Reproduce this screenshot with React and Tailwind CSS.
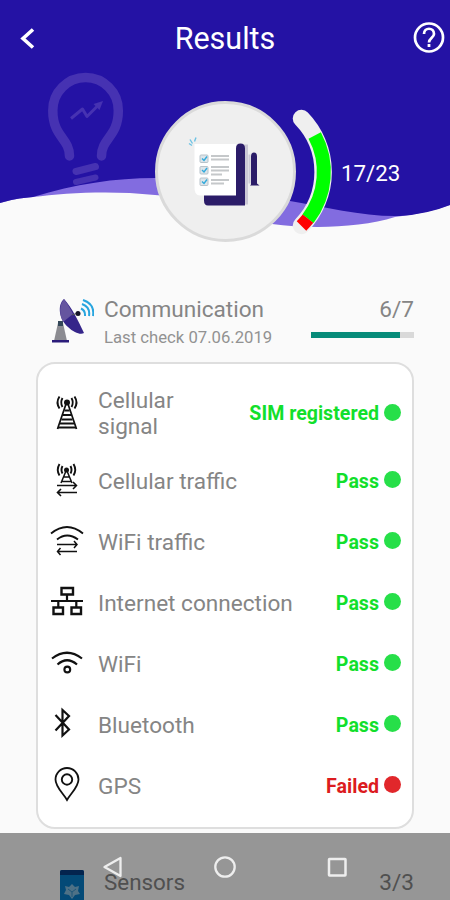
import React from "react";

const tests = [
	{ name: "Cellular signal", result: "SIM registered", ok: true, icon: TowerIcon },
	{ name: "Cellular traffic", result: "Pass", ok: true, icon: TowerTrafficIcon },
	{ name: "WiFi traffic", result: "Pass", ok: true, icon: WifiTrafficIcon },
	{ name: "Internet connection", result: "Pass", ok: true, icon: NetworkIcon },
	{ name: "WiFi", result: "Pass", ok: true, icon: WifiIcon },
	{ name: "Bluetooth", result: "Pass", ok: true, icon: BluetoothIcon },
	{ name: "GPS", result: "Failed", ok: false, icon: PinIcon },
];

function Icon({ children }) {
	return (
		<svg
			width="36"
			height="40"
			viewBox="0 0 36 40"
			fill="none"
			stroke="#111"
			strokeWidth="1.6"
			className="shrink-0"
		>
			{children}
		</svg>
	);
}

function TowerIcon() {
	return (
		<Icon>
			<circle cx="18" cy="9.5" r="3" fill="#111" stroke="none" />
			<path d="M17 11L8.5 36M19 11L27.5 36" strokeWidth="1.7" />
			<path d="M15.5 17.5h5M14 22h8M12.5 26.5h11M11 30.500h14M9 34.500h18" strokeWidth="2" />
			<path d="M13.500 5Q11 9.500 13.500 14M22.500 5Q25 9.500 22.500 14M10.500 3.500Q6.500 9.500 10.500 15.500M25.500 3.500Q29.500 9.500 25.500 15.500" strokeWidth="1.900" />
		</Icon>
	);
}

function TowerTrafficIcon() {
	return (
		<Icon>
			<circle cx="17.500" cy="9" r="2.500" fill="#111" stroke="none" />
			<path d="M17 10L12 22M18 10L23 22M15 16h5M13 20.500h9" strokeWidth="1.500" />
			<path d="M13.500 5Q11.500 9 13.500 12.500M21.500 5Q23.500 9 21.500 12.500M10.500 3Q7 9 10.500 14.500M24.500 3Q28 9 24.500 14.500" strokeWidth="1.900" />
			<path d="M8 24.500h19M24 21l3.500 3.500L24 28" strokeWidth="1.500" />
			<path d="M28 31.500H8.500M12 28L8.500 31.500l3.500 3.500" strokeWidth="1.600" />
		</Icon>
	);
}

function WifiTrafficIcon() {
	return (
		<Icon>
			<path d="M2 11.500Q18 -1.500 34 11.500" strokeWidth="1.900" />
			<path d="M8 17.500Q18 9.500 29 17.500" strokeWidth="1.900" />
			<path d="M8 22.500h20M25 19l3 3.500-3 3.500" strokeWidth="1.500" />
			<path d="M28 29.500H8.500M11.500 26l-3 3.500 3 3.500" strokeWidth="1.500" />
		</Icon>
	);
}

function NetworkIcon() {
	return (
		<Icon>
			<path d="M12.500 5h11.500v6.500H12.500zM4.500 24.500h9.500v6.500H4.500zM22.500 24.500h9.500v6.500h-9.500z" strokeWidth="2.400" />
			<path d="M2 18h32M18 12v6M9.300 18v7M27.300 18v7" strokeWidth="2.200" />
		</Icon>
	);
}

function WifiIcon() {
	return (
		<Icon>
			<path d="M3 14.500Q18 3 33 14.500M8.500 20.500Q18 12 28 20.500" strokeWidth="2.200" />
			<circle cx="18.300" cy="25.500" r="2.900" strokeWidth="2.100" />
		</Icon>
	);
}

function BluetoothIcon() {
	return (
		<Icon>
			<path d="M6.500 10L20 24.500l-6.500 6V5L20 11 6.500 25.500" strokeWidth="2.200" />
		</Icon>
	);
}

function PinIcon() {
	return (
		<Icon>
			<path d="M18 34C14 27 6.500 21 6.500 13.500a11.500 11.500 0 0 1 23 0C29.500 21 22 27 18 34z" strokeWidth="1.800" />
			<circle cx="18" cy="13.500" r="5.200" strokeWidth="1.900" />
		</Icon>
	);
}

function HeaderBackground() {
	return (
		<svg className="absolute inset-0" width="450" height="245" viewBox="0 0 450 245" fill="none">
			<path d="M0 0H450V205Q428 213 395 217C360 228 310 229 272 224C220 213 190 198 155 195C110 190 65 193 33 197C20 198 10 200 0 203z" fill="#826ce0" />
			<path d="M0 0H450V205Q428 214 400 216C365 217 325 207 290 201C250 190 215 178 155 178C115 178 75 184 33 197C20 198 10 200 0 203z" fill="#2412a4" />
			<g stroke="#4632b2" strokeLinecap="round" strokeLinejoin="round">
				<path d="M69.500 156C69.500 138 52.800 137 52.800 110.500A32.750 33 0 0 1 118.300 110.500C118.300 137 101.500 138 101.500 156" strokeWidth="9.500" />
				<path d="M76 171.500L95.500 166.500" strokeWidth="7" />
				<path d="M76 182L95.500 177.500" strokeWidth="6" />
				<path d="M71 118.500L82.500 109L87 116.500L98 105.500" strokeWidth="3" strokeLinecap="butt" />
				<path d="M93.500 104L103 101L99.500 110z" fill="#4632b2" stroke="none" />
			</g>
		</svg>
	);
}

function ChecklistBadge() {
	return (
		<div className="flex size-[141px] items-center justify-center rounded-full border-3 border-[#dadada] bg-[#efefef]">
			<svg width="135" height="135" viewBox="0 5.5 135 135" fill="none">
				<path d="M84 46h6v60h-6z" fill="#cbc8d5" />
				<path d="M46 96V102Q46 107 50 107H87V50Q87 45 82.500 45Q78 45 78 50V96z" fill="#2b1c68" />
				<path d="M93 86V58Q93 54 96 54Q99 54 99 58V85L101.500 87H92z" fill="#2b1c68" />
				<path d="M91.500 56v29" stroke="#cbc8d5" strokeWidth="2" />
				<path d="M36.500 45.500H78V97H42Q36 97 36.500 88z" fill="#fff" />
				<g stroke="#c5c8ca" strokeWidth="1.800">
					<path d="M53 57.500h18M53 61h18M53 68.500h18M53 72h18M53 76h11M53 81.500h18M53 85h13" />
				</g>
				<g fill="#dde5ea" stroke="#b8c3ca" strokeWidth="1">
					<rect x="42" y="56.500" width="8" height="7.500" rx="1" />
					<rect x="42" y="68" width="8" height="7.500" rx="1" />
					<rect x="42" y="79.500" width="8" height="7.500" rx="1" />
				</g>
				<path d="M44 60l2 2 3-4M44 71.500l2 2 3-4M44 83l2 2 3-4" stroke="#31aadc" strokeWidth="1.400" />
				<path d="M31 45l3 2M32 41l2.500 4M38 39l-1.500 4" stroke="#6cc2e4" strokeWidth="1.400" />
			</svg>
		</div>
	);
}

function Gauge() {
	return (
		<svg className="-ml-1" width="42" height="128" viewBox="292 107 42 128" fill="none">
			<path d="M301.500 117.500A77 77 0 0 1 301.500 224.500" stroke="#efefef" strokeWidth="17.500" strokeLinecap="round" />
			<path d="M314.700 134.500A77 77 0 0 1 308 217.700" stroke="#00ff00" strokeWidth="14" />
			<path d="M308 217.700A77 77 0 0 1 301.500 225" stroke="#ff0000" strokeWidth="13.500" />
		</svg>
	);
}

function DishIcon() {
	return (
		<svg width="44" height="46" viewBox="0 0 44 46" fill="none">
			<path d="M8 25H13L17 43H4z" fill="#8b8b91" />
			<path d="M8 23h5v5H8z" fill="#344758" />
			<path d="M2 42h17v2.500H2z" fill="#2b1c7a" />
			<path d="M14 1C7 7 9 21 18 29C24 35 31 37 34 35C28 22 22 10 14 1z" fill="#35258a" />
			<path d="M14 1C9 7 9 16 13 24L23 16C20 10 17 5 14 1z" fill="#65559f" />
			<path d="M22 17l6-2" stroke="#555" />
			<circle cx="28" cy="15.500" r="2.500" fill="#151528" />
			<path d="M31 10.500Q35.500 12.500 35 18M32 6Q40.500 9 39 18M33 2Q45 6 43 18" stroke="#28a5df" strokeWidth="2" />
		</svg>
	);
}

function SensorIcon() {
	return (
		<svg width="24" height="34" viewBox="0 0 24 34">
			<rect width="24" height="40" rx="2" fill="#087cc7" />
			<path d="M0 5V2Q0 0 2 0H22Q24 0 24 2V5z" fill="#073d83" />
			<path d="M12 14l3 3 4-1-1 5 2 3-5 1-3 4-3-4-5-1 2-4-1-4 4 1z" fill="#83bce0" />
			<path d="M8 19l4 3 4-3M12 22v5" stroke="#358fc9" fill="none" />
		</svg>
	);
}

function TestRow({ test }) {
	const TestIcon = test.icon;

	return (
		<div className="flex h-[61px] items-center first:h-[74px]">
			<TestIcon />
			<div className="ml-[13px] flex flex-1 items-center justify-between">
				<span
					className={`pt-0.5 text-[22.6px] leading-[26px] text-[#858585] ${
						test.name === "Cellular signal" ? "w-[100px]" : "whitespace-nowrap"
					}`}
				>
					{test.name}
				</span>
				<div className="flex items-center gap-[5px]">
					<span
						className={`pt-0.5 text-[19.6px] leading-6 font-bold ${test.ok ? "text-[#12df2b]" : "text-[#dc1b20]"}`}
					>
						{test.result}
					</span>
					<span
						className={`mb-[2px] size-[17px] rounded-full ${test.ok ? "bg-[#27df49]" : "bg-[#e1272b]"}`}
					></span>
				</div>
			</div>
		</div>
	);
}

export default function App() {
	return (
		<div className="relative flex h-[900px] w-[450px] flex-col overflow-hidden bg-[#fafafa] font-[Roboto,sans-serif]">
			<header className="relative h-[245px] shrink-0">
				<HeaderBackground />
				<div className="relative grid h-[76px] grid-cols-[1fr_auto_1fr] items-center pr-1 pl-5 text-white">
					<svg width="16" height="24" viewBox="0 0 16 24" fill="none" stroke="#fff" strokeWidth="3.600">
						<path d="M13 3.500L3 12.500l10 9" />
					</svg>
					<h1 className="pt-0.5 pr-4 text-[30.5px] leading-9">Results</h1>
					<svg className="justify-self-end" width="33" height="33" viewBox="0 0 33 33" fill="none" stroke="#fff">
						<circle cx="16" cy="15.500" r="14" strokeWidth="2.700" />
						<path d="M11 12C11 5 21 5 21 12C21 15.500 16 16 16 20.500" strokeWidth="2.700" />
						<path d="M16 22v3" strokeWidth="2.800" />
					</svg>
				</div>
				<div className="relative mt-[25px] ml-[155px] flex items-center">
					<ChecklistBadge />
					<Gauge />
					<span className="mt-[4px] ml-[7px] text-[22.3px] text-white">17/23</span>
				</div>
			</header>

			{/* COMMUNICATION */}
			<section className="shrink-0 px-9 pt-[50px]">
				<div className="flex h-[67px] items-start pl-[14px]">
					<div className="pt-[3px]">
						<DishIcon />
					</div>
					<div className="ml-[10px] flex-1">
						<h2 className="text-[22.6px] leading-[30px] text-[#858585]">Communication</h2>
						<p className="pt-px text-[16.700px] leading-6 text-[#929292]">Last check 07.06.2019</p>
					</div>
					<div className="w-[103px] text-right">
						<p className="text-[22.6px] leading-[30px] text-[#858585]">6/7</p>
						<div className="mt-[7px] h-[6px] bg-[#d9d9d9]">
							<div className="h-full w-[89px] bg-[#078b79]"></div>
						</div>
					</div>
				</div>
				<div className="h-[467px] rounded-[19px] border-2 border-[#dedede] bg-white py-3 pr-[11px] pl-[11px]">
					{tests.map((test) => (
						<TestRow key={test.name} test={test} />
					))}
				</div>
			</section>

			{/* SENSORS */}
			<section className="mt-[41px] flex shrink-0 items-start pr-9 pl-[60px]">
				<SensorIcon />
				<h2 className="-mt-[3px] ml-5 flex-1 text-[22.4px] leading-[30px] text-[#858585]">Sensors</h2>
				<span className="-mt-[2px] text-[22.6px] leading-[30px] text-[#858585]">3/3</span>
			</section>

			{/* SYSTEM BAR */}
			<div className="absolute inset-x-0 bottom-0 flex h-[67px] items-center justify-center gap-[86px] bg-black/40">
				<svg width="26" height="26" viewBox="0 0 26 26" fill="none" stroke="#eee" strokeWidth="2.300">
					<path d="M20.500 4V22L4.500 13z" strokeLinejoin="round" />
				</svg>
				<svg width="26" height="26" viewBox="0 0 26 26" fill="none" stroke="#eee" strokeWidth="2.300">
					<circle cx="13" cy="13" r="9.700" />
				</svg>
				<svg width="26" height="26" viewBox="0 0 26 26" fill="none" stroke="#eee" strokeWidth="2.500">
					<rect x="5" y="5" width="16.500" height="16.500" rx="0.500" />
				</svg>
			</div>
		</div>
	);
}
